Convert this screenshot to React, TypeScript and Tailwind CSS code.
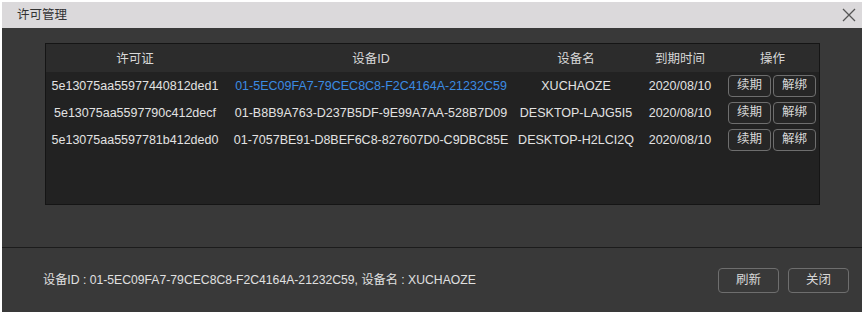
import React from "react";

type License = {
  key: string;
  deviceId: string;
  deviceName: string;
  expires: string;
  active?: boolean;
};

const licenses: License[] = [
  {
    key: "5e13075aa55977440812ded1",
    deviceId: "01-5EC09FA7-79CEC8C8-F2C4164A-21232C59",
    deviceName: "XUCHAOZE",
    expires: "2020/08/10",
    active: true,
  },
  {
    key: "5e13075aa5597790c412decf",
    deviceId: "01-B8B9A763-D237B5DF-9E99A7AA-528B7D09",
    deviceName: "DESKTOP-LAJG5I5",
    expires: "2020/08/10",
  },
  {
    key: "5e13075aa5597781b412ded0",
    deviceId: "01-7057BE91-D8BEF6C8-827607D0-C9DBC85E",
    deviceName: "DESKTOP-H2LCI2Q",
    expires: "2020/08/10",
  },
];

const font = {
  fontFamily: '"Liberation Sans", Arial, "Noto Sans CJK SC", sans-serif',
};

const RowButton = ({ label }: { label: string }) => (
  <button className="w-[43px] h-[22px] rounded-[4px] border border-[#6e6e6e] bg-[#262626] text-[12.5px] text-[#d8d8d8] leading-none">
    {label}
  </button>
);

const FooterButton = ({ label }: { label: string }) => (
  <button className="w-[61px] h-[25px] rounded-[4px] border-[1.5px] border-[#6e6e6e] bg-[#393939] text-[12.5px] text-[#d8d8d8] leading-none">
    {label}
  </button>
);

const App = () => {
  return (
    <div className="w-[868px] h-[318px] bg-white pl-[2px] pt-[2px]" style={font}>
      <div className="w-[860px] h-[310px] flex flex-col bg-[#393939]">
        <div className="h-[26px] bg-[#dbd9db] flex items-center justify-between pl-[15px] pr-[6px]">
          <span className="text-[12.5px] text-[#333]">许可管理</span>
          <svg width="14" height="14" viewBox="0 0 14 14" className="text-[#555]">
            <path d="M1 1 L13 13 M13 1 L1 13" stroke="currentColor" strokeWidth="1.3" fill="none" />
          </svg>
        </div>
        <div className="h-[219px] pt-[15px] pl-[43px] pr-[42px]">
          <div className="h-[162px] bg-[#222] border border-[#151515]">
            <table className="w-full table-fixed border-collapse text-[12.5px] text-[#e2e2e2]">
              <colgroup>
                <col className="w-[178px]" />
                <col className="w-[294px]" />
                <col className="w-[116px]" />
                <col className="w-[92px]" />
                <col />
              </colgroup>
              <thead>
                <tr className="h-[28px] bg-[#2c2c2c] text-[#d8d8d8]">
                  <th className="font-normal pt-[2px]">许可证</th>
                  <th className="font-normal pt-[2px]">设备ID</th>
                  <th className="font-normal pt-[2px]">设备名</th>
                  <th className="font-normal pt-[2px]">到期时间</th>
                  <th className="font-normal pt-[2px]">操作</th>
                </tr>
              </thead>
              <tbody>
                {licenses.map((l) => (
                  <tr key={l.key} className="h-[27px] text-center whitespace-nowrap">
                    <td className="pt-[1px]">{l.key}</td>
                    <td className={l.active ? "pt-[1px] text-[#3b8be2]" : "pt-[1px]"}>{l.deviceId}</td>
                    <td className="pt-[1px]">{l.deviceName}</td>
                    <td className="pt-[1px]">{l.expires}</td>
                    <td>
                      <div className="flex gap-[2px] pl-[2px]">
                        <RowButton label="续期" />
                        <RowButton label="解绑" />
                      </div>
                    </td>
                  </tr>
                ))}
              </tbody>
            </table>
          </div>
        </div>
        <div className="h-px bg-[#1c1c1c]" />
        <div className="flex-1 flex items-center justify-between pl-[41px] pr-[13px]">
          <span className="text-[12.2px] text-[#e0e0e0]">
            设备ID : 01-5EC09FA7-79CEC8C8-F2C4164A-21232C59, 设备名 : XUCHAOZE
          </span>
          <div className="flex gap-[9px]">
            <FooterButton label="刷新" />
            <FooterButton label="关闭" />
          </div>
        </div>
      </div>
    </div>
  );
};

export default App;
